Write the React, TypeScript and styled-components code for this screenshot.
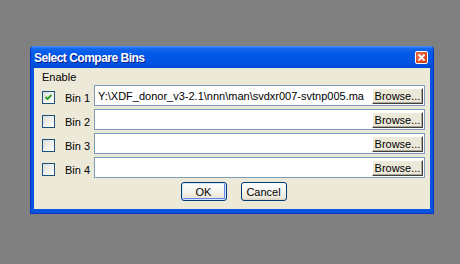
import styled, { createGlobalStyle } from "styled-components";

const GlobalStyle = createGlobalStyle`
  html, body {
    margin: 0;
    padding: 0;
    background: #808080;
  }
  body {
    font-family: "Liberation Sans", Arial, sans-serif;
    font-size: 11px;
    color: #000;
  }
`;

const bins = [
  { id: 1, checked: true, path: "Y:\\XDF_donor_v3-2.1\\nnn\\man\\svdxr007-svtnp005.ma" },
  { id: 2, checked: false, path: "" },
  { id: 3, checked: false, path: "" },
  { id: 4, checked: false, path: "" },
];

function CloseIcon() {
  return (
    <svg width="7" height="7" viewBox="0 0 7 7">
      <path d="M1 1 L6 6 M6 1 L1 6" stroke="#fff" strokeWidth="1.8" strokeLinecap="square" />
    </svg>
  );
}

function CheckMark() {
  return (
    <svg width="9" height="9" viewBox="0 0 9 9">
      <path d="M1.5 4 L3.5 6 L7.5 2" stroke="#21a121" strokeWidth="1.8" fill="none" />
    </svg>
  );
}

export default function App() {
  return (
    <>
      <GlobalStyle />
      <Page>
        <Window>
          <TitleBar>
            <Title>Select Compare Bins</Title>
            <CloseButton>
              <CloseIcon />
            </CloseButton>
          </TitleBar>
          <Body>
            <EnableLabel>Enable</EnableLabel>
            {bins.map((bin) => (
              <BinRow key={bin.id}>
                <Checkbox>{bin.checked && <CheckMark />}</Checkbox>
                <BinLabel>Bin {bin.id}</BinLabel>
                <PathField>
                  <PathText>{bin.path}</PathText>
                  <BrowseButton>Browse...</BrowseButton>
                </PathField>
              </BinRow>
            ))}
            <ButtonBar>
              <DialogButton $default>OK</DialogButton>
              <DialogButton>Cancel</DialogButton>
            </ButtonBar>
          </Body>
        </Window>
      </Page>
    </>
  );
}

const Page = styled.div`
  min-height: 264px;
  padding: 46px 0 0 30px;
  box-sizing: border-box;
`;

const Window = styled.div`
  width: 404px;
  display: flex;
  flex-direction: column;
  background: #0a55e0;
  border: 1px solid #0832c8;
  border-top: none;
  border-radius: 4px 4px 0 0;
  box-sizing: border-box;
  padding-bottom: 4px;
  overflow: hidden;
`;

const TitleBar = styled.div`
  height: 22px;
  display: flex;
  align-items: center;
  justify-content: space-between;
  padding: 0 5px 0 3px;
  background: linear-gradient(
    180deg,
    #4a93f8 0%,
    #1467ee 12%,
    #0058e8 40%,
    #0054e3 75%,
    #0048d4 100%
  );
`;

const Title = styled.span`
  color: #fff;
  font-weight: bold;
  font-size: 12px;
  letter-spacing: -0.5px;
  padding-top: 1px;
  text-shadow: 1px 1px #0a1e8a;
`;

const CloseButton = styled.div`
  width: 13px;
  height: 13px;
  box-sizing: border-box;
  border: 1px solid #fff;
  border-radius: 2px;
  background: radial-gradient(circle at 35% 35%, #ee7b55, #d8431c 70%, #c23a16);
  display: flex;
  align-items: center;
  justify-content: center;
`;

const Body = styled.div`
  margin: 0 3px;
  height: 141px;
  background: #ece9d8;
  padding: 2px 5px 0 8px;
  box-sizing: border-box;
  display: flex;
  flex-direction: column;
  gap: 3px;
`;

const EnableLabel = styled.div`
  height: 14px;
  line-height: 14px;
  margin-bottom: -2px;
`;

const BinRow = styled.div`
  height: 21px;
  display: flex;
  align-items: center;
`;

const Checkbox = styled.div`
  width: 13px;
  height: 13px;
  box-sizing: border-box;
  border: 1px solid #1c5180;
  background: linear-gradient(135deg, #dcdcd7 0%, #f2f2ef 60%, #fff 100%);
  display: flex;
  align-items: center;
  justify-content: center;
  margin: 3px 10px 0 0;
`;

const BinLabel = styled.span`
  width: 29px;
  padding-top: 4px;
`;

const PathField = styled.div`
  flex: 1;
  height: 21px;
  box-sizing: border-box;
  border: 1px solid #7f9db9;
  background: #fff;
  display: flex;
  align-items: center;
  padding: 0 1px 0 3px;
`;

const PathText = styled.span`
  flex: 1;
  overflow: hidden;
  white-space: nowrap;
`;

const BrowseButton = styled.div`
  width: 51px;
  height: 16px;
  box-sizing: border-box;
  background: #ece9d8;
  border: 1px solid;
  border-color: #fff #404040 #404040 #fff;
  box-shadow: inset -1px -1px #aca899;
  display: flex;
  align-items: center;
  justify-content: center;
  margin-top: 1px;
`;

const ButtonBar = styled.div`
  display: flex;
  justify-content: center;
  gap: 14px;
  margin-top: 1px;
`;

const DialogButton = styled.div<{ $default?: boolean }>`
  width: 46px;
  height: 19px;
  box-sizing: border-box;
  border: 1px solid #003c74;
  border-radius: 3px;
  background: linear-gradient(180deg, #fff 0%, #f4f3ee 50%, #ece9d8 85%, #d6d0c5 100%);
  box-shadow: ${({ $default }) =>
    $default ? "inset 0 0 0 1px #cee7ff, inset -1px -1px 0 1px #6982ee" : "none"};
  display: flex;
  align-items: center;
  justify-content: center;
`;
